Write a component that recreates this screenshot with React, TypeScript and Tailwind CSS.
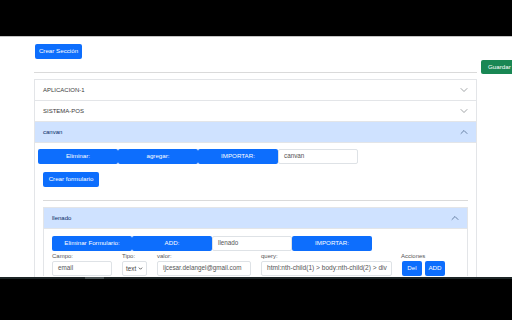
import React from "react";

const sans = "font-['Liberation_Sans',Arial,sans-serif]";

function Chevron({ up = false, color = "#6b6f73" }: { up?: boolean; color?: string }) {
  return (
    <svg
      viewBox="0 0 16 16"
      className={up ? "h-[8px] w-[8px] rotate-180" : "h-[8px] w-[8px]"}
      fill="none"
      stroke={color}
      strokeWidth={1.4}
      strokeLinecap="round"
      strokeLinejoin="round"
    >
      <path d="M2 5L8 11L14 5" />
    </svg>
  );
}

function Btn({ children, className = "" }: { children: React.ReactNode; className?: string }) {
  return (
    <button
      className={`flex h-[15px] items-center justify-center whitespace-nowrap rounded-[2px] bg-[#0d6efd] text-[6.2px] leading-none text-white ${className}`}
    >
      {children}
    </button>
  );
}

function Field({ value, className = "" }: { value: string; className?: string }) {
  return (
    <div
      className={`flex h-[15px] items-center overflow-hidden whitespace-nowrap rounded-[2px] border border-[#dee2e6] bg-white px-[5px] leading-none text-[#555] ${className}`}
    >
      {value}
    </div>
  );
}

function Header({ label, active = false }: { label: string; active?: boolean }) {
  return (
    <div
      className={
        active
          ? "flex h-[20px] items-center justify-between bg-[#cfe2ff] px-[8px] text-[6px] text-[#052c65]"
          : "flex h-[20px] items-center justify-between bg-white px-[8px] text-[6px] text-[#3a3a3a]"
      }
    >
      <span>{label}</span>
      <Chevron up={active} color={active ? "#3d5a80" : "#7a7e82"} />
    </div>
  );
}

export default function App() {
  return (
    <div className={`h-[320px] w-[512px] overflow-hidden bg-black ${sans}`}>
      {/* top dark bar */}
      <div className="h-[37px] border-b border-[#c4c4c4] bg-black" />

      {/* page */}
      <div className="flex h-[240px] gap-[4px] overflow-hidden bg-white pl-[34px]">
        <div className="w-[443px] shrink-0 pt-[7px]">
          <Btn className="ml-[1px] w-[47px]">Crear Sección</Btn>

          <div className="mt-[13px] h-px bg-[#dadada]" />

          {/* outer accordion */}
          <div className="mt-[6px] border-x border-t border-[#e3e5e8]">
            <div className="border-b border-[#e3e5e8]">
              <Header label="APLICACION-1" />
            </div>
            <div className="border-b border-[#e3e5e8]">
              <Header label="SISTEMA-POS" />
            </div>
            <div className="border-b border-[#e3e5e8]">
              <Header label="canvan" active />
            </div>

            <div className="px-[8px] pb-[10px] pt-[6px]">
              <div className="-ml-[5px] flex">
                <Btn className="w-[80px]">Eliminar:</Btn>
                <Btn className="w-[80px]">agregar:</Btn>
                <Btn className="w-[80px]">IMPORTAR:</Btn>
                <Field value="canvan" className="w-[80px] text-[6.3px]" />
              </div>

              <Btn className="mt-[8px] w-[56px]">Crear formulario</Btn>

              <div className="mt-[13px] h-px bg-[#dadada]" />

              {/* inner accordion */}
              <div className="mt-[6px] border-x border-t border-[#e3e5e8]">
                <div className="border-b border-[#e3e5e8]">
                  <Header label="llenado" active />
                </div>
                <div className="px-[8px] pt-[7px]">
                  <div className="flex">
                    <Btn className="w-[80px]">Eliminar Formulario:</Btn>
                    <Btn className="w-[80px]">ADD:</Btn>
                    <Field value="llenado" className="w-[80px] text-[6.3px]" />
                    <Btn className="w-[80px]">IMPORTAR:</Btn>
                  </div>

                  <div className="flex text-[6px] text-[#555]">
                    <div className="w-[60px]">
                      <div className="h-[10px] leading-[10px]">Campo:</div>
                      <Field value="email" className="text-[6.3px]" />
                    </div>
                    <div className="ml-[10px] w-[25px]">
                      <div className="h-[10px] leading-[10px]">Tipo:</div>
                      <div className="flex h-[15px] items-center justify-between rounded-[2px] border border-[#dee2e6] px-[3px] text-[6.3px] text-[#444]">
                        <span>text</span>
                        <svg viewBox="0 0 6 4" className="h-[3px] w-[5px]" fill="none" stroke="#333" strokeWidth={1}>
                          <path d="M0.8 0.8L3 3L5.2 0.8" />
                        </svg>
                      </div>
                    </div>
                    <div className="ml-[10px] w-[94px]">
                      <div className="h-[10px] leading-[10px]">valor:</div>
                      <Field value="ijcesar.delangel@gmail.com" className="text-[6.3px]" />
                    </div>
                    <div className="ml-[10px] w-[131px]">
                      <div className="h-[10px] leading-[10px]">query:</div>
                      <Field value="html:nth-child(1) > body:nth-child(2) > div" className="text-[6.6px]" />
                    </div>
                    <div className="ml-[9px]">
                      <div className="h-[10px] leading-[10px]">Acciones</div>
                      <div className="flex gap-[3px] pl-[1px]">
                        <Btn className="w-[20px]">Del</Btn>
                        <Btn className="w-[20px]">ADD</Btn>
                      </div>
                    </div>
                  </div>
                </div>
              </div>
            </div>
          </div>
        </div>

        <button className="mt-[23px] flex h-[14px] shrink-0 items-center whitespace-nowrap rounded-[2px] bg-[#198754] pl-[7px] pr-[7px] text-[6.2px] leading-none text-white">
          Guardar
        </button>
      </div>

      {/* horizontal scrollbar strip */}
      <div className="flex h-[2px] bg-[#1d2526]">
        <div className="ml-[85px] h-full w-[19px] bg-[#4a5354]" />
      </div>
    </div>
  );
}
